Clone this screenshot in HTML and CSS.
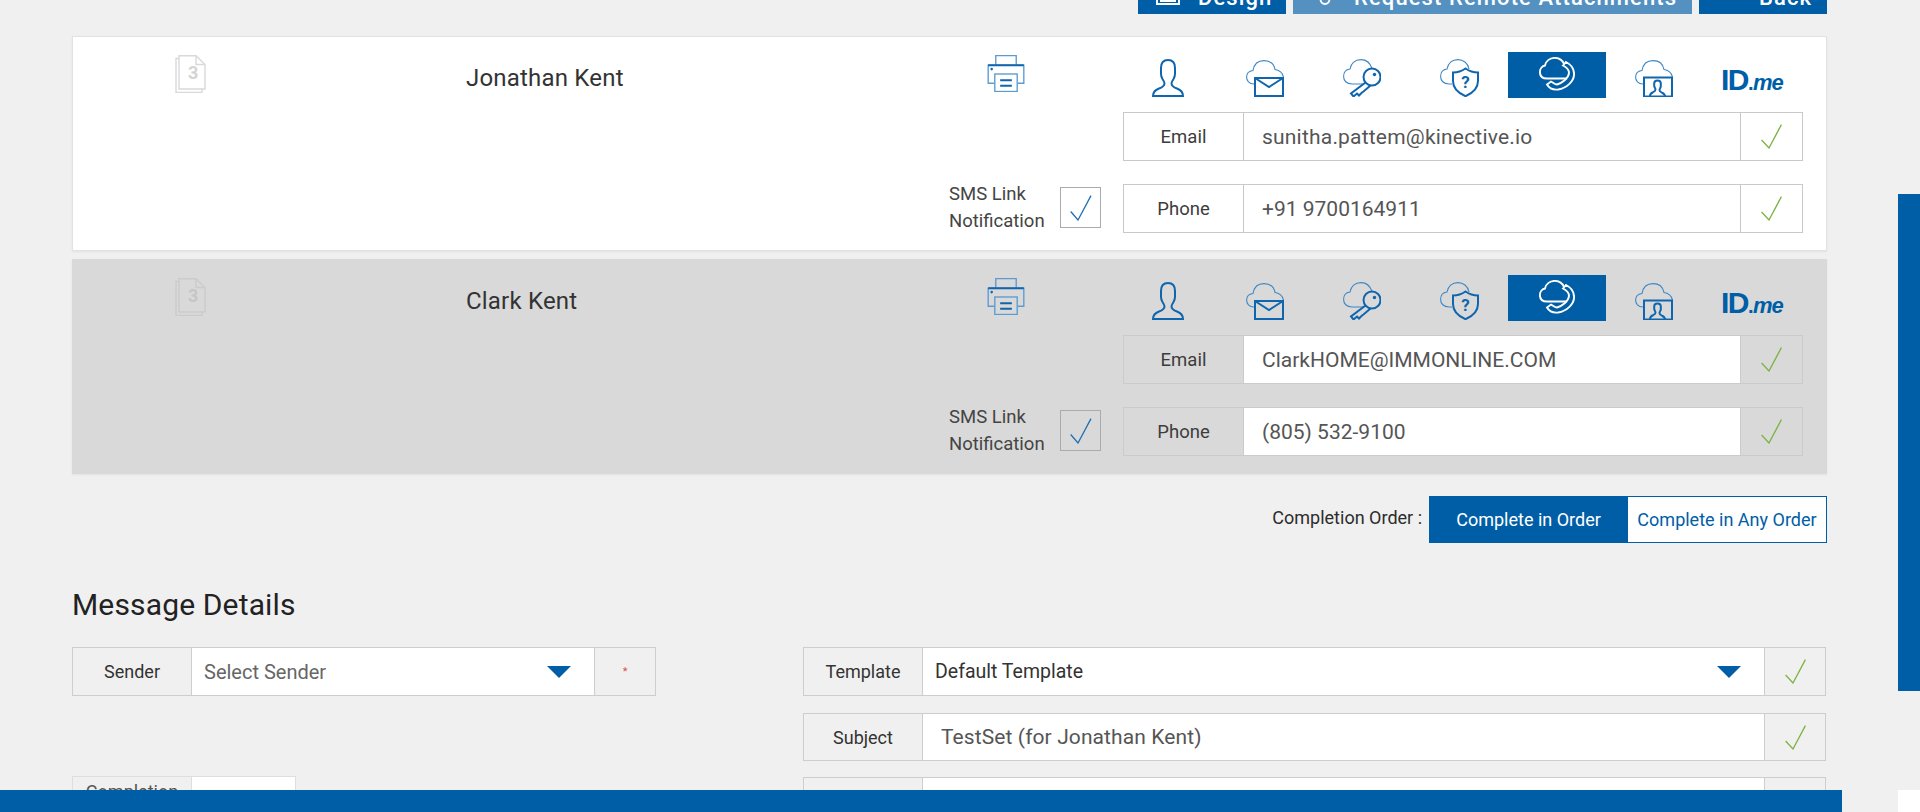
FILE: index.html
```html
<!DOCTYPE html>
<html lang="en">
<head>
<meta charset="utf-8">
<title>Recipients</title>
<link rel="stylesheet" href="styles.css">
</head>
<body>
<svg class="defs" xmlns="http://www.w3.org/2000/svg">
  <symbol id="i-pages" viewBox="0 0 31 38">
    <path class="ln" d="M4 3.500H1V37.500H27V34"/>
    <path class="ln" d="M4 .7H21L30 9.500V34H4Z"/>
    <path class="ln" d="M21 .7V9.500H30"/>
  </symbol>
  <symbol id="i-print" viewBox="0 0 38 38">
    <path class="lt" d="M8.500 10V.7H29.500V10"/>
    <path class="lt" d="M7 29H.7V10.500H37.300V29H31"/>
    <path class="dk" d="M.7 10.500H37.300"/>
    <circle class="fd" cx="4.300" cy="14.500" r="1.300"/>
    <rect class="lt" x="7.500" y="19.500" width="23" height="18"/>
    <path class="dk" d="M13 26H25M13 31.500H25"/>
  </symbol>
  <symbol id="i-person" viewBox="0 0 32 38">
    <path class="dk" d="M1 37c0-4 2-6 6-7.500 4-1.500 5.500-3 5.500-5 0-1.500-1-3-2-4.500-.8-1.500-1.500-3-1.500-5V9C9 4 11.500 1 16 1s7 3 7 8v6c0 2-.7 3.500-1.500 5-1 1.500-2 3-2 4.500 0 2 1.500 3.500 5.500 5 4 1.500 6 3.500 6 7.500z"/>
  </symbol>
  <symbol id="i-mail" viewBox="0 0 38 37">
    <path class="th" d="M8 24C3 24 .6 20.500 .6 17 .6 13.500 3 11 7 10.500 8 4.500 12 .6 18 .6 24 .6 28 4 29 9.500 33 10 37 13 37.400 17"/>
    <rect class="dk" x="9" y="18" width="28" height="18"/>
    <path class="dk" d="M9 18L23 27 37 18"/>
  </symbol>
  <symbol id="i-key" viewBox="0 0 38 38">
    <path class="th" d="M21 25H9C3.500 25 .6 21.500 .6 17.500 .6 13.500 3 10.500 7 10 8 4.500 12 .6 18 .6 23 .6 27 3.500 29 9.500"/>
    <circle class="dk" cx="29" cy="18" r="8.500"/>
    <circle class="fd" cx="31.500" cy="15.500" r="1.700"/>
    <path class="dk" d="M22.500 23.500L8 34.500 10.500 37.500 14 34.500 16 36.500 19 33.500 20.500 32.500 27.500 26.500"/>
  </symbol>
  <symbol id="i-shield" viewBox="0 0 39 38">
    <path class="th" d="M12 25H9C3.500 25 .6 21.500 .6 17.500 .6 13.500 3 10.500 7 10 8 4.500 12 .6 18 .6 23 .6 28 4 29 10"/>
    <path class="dk" d="M25.500 9.500C29 12 33 13.500 38 13.500V22C38 29 33 34 25.500 37.200 18 34 13 29 13 22V13.500C18 13.500 22 12 25.500 9.500Z"/>
    <text class="qm" x="25.500" y="29">?</text>
  </symbol>
  <symbol id="i-call" viewBox="0 0 36 34">
    <path class="wt" d="M8 21.500C3 21.500 .9 18.500 .9 15 .9 11.500 3.500 9 6 8.500 7 4 11 .9 16 .9 20 .9 24 3.500 25 7M8 21.500H28"/>
    <path class="wt" d="M24 8.500L27 5C33 8 35.100 12 35.100 17 35.100 24 28 31 19 32.500 14.500 33 10 31 8 27.500L12 24.500C14 25.500 16 27.500 18 27.500 23 26 29.500 21.500 30 16 30 13 27 10 24 8.500Z"/>
  </symbol>
  <symbol id="i-video" viewBox="0 0 38 37">
    <path class="th" d="M8 24C3 24 .6 20.500 .6 17 .6 13.500 3 11 7 10.500 8 4.500 12 .6 18 .6 24 .6 28 4 29 9.500 33 10 37 13 37.400 17"/>
    <rect class="dk" x="9" y="17.500" width="28" height="19"/>
    <path class="dk" d="M15 36c0-2 1-3 3-3.800 1.500-.7 2.500-1.500 2.500-2.700 0-1-1-2-1.300-3.500v-2.500c0-2 1.300-3 3.300-3s3.300 1 3.300 3V26.500c-.3 1.500-1.300 2.500-1.300 3.500 0 1.200 1 2 2.500 2.700 2 .8 3 1.800 3 3.800"/>
  </symbol>
  <symbol id="i-ok" viewBox="0 0 21 25">
    <path class="ok" d="M.6 16L8 24 20.400 .6"/>
  </symbol>
  <symbol id="i-tick" viewBox="0 0 22 26">
    <path class="tk" d="M.7 16.500L8 25 21 .6"/>
  </symbol>
  <symbol id="i-doc" viewBox="0 0 24 16">
    <path class="wt" d="M1 1H23V15H1ZM4 7H20M4 12H20"/>
  </symbol>
  <symbol id="i-clip" viewBox="0 0 12 16">
    <path class="wt" d="M1.500 2V10C1.500 13 3.500 15 6 15S10.500 13 10.500 10V2"/>
  </symbol>
</svg>

<div class="toolbar">
  <a class="btn btn-design"><svg class="btn-ico-doc"><use href="#i-doc"/></svg><span>Design</span></a>
  <a class="btn btn-request"><svg class="btn-ico-clip"><use href="#i-clip"/></svg><span>Request Remote Attachments</span></a>
  <a class="btn btn-back"><span>Back</span></a>
</div>

<main class="page">
  <section class="card">
    <div class="card-pages"><svg class="ico-pages"><use href="#i-pages"/></svg><b class="pages-num">3</b></div>
    <div class="card-name">Jonathan Kent</div>
    <div class="card-right">
      <div class="printer"><svg class="ico"><use href="#i-print"/></svg></div>
      <div class="auth">
        <span class="auth-item auth-nudge"><svg class="ico-person"><use href="#i-person"/></svg></span>
        <span class="auth-item auth-nudge"><svg class="ico"><use href="#i-mail"/></svg></span>
        <span class="auth-item"><svg class="ico ico-h38"><use href="#i-key"/></svg></span>
        <span class="auth-item"><svg class="ico ico-w39"><use href="#i-shield"/></svg></span>
        <span class="auth-item is-on"><svg class="ico-call"><use href="#i-call"/></svg></span>
        <span class="auth-item"><svg class="ico"><use href="#i-video"/></svg></span>
        <span class="auth-item idme"><b>ID</b><b class="idme-dot">.</b><i>me</i></span>
      </div>
      <div class="blank"></div>
      <div class="field">
        <span class="f-label">Email</span><span class="f-value f-value-wide">sunitha.pattem@kinective.io</span><span class="f-state"><svg class="ico-ok"><use href="#i-ok"/></svg></span>
      </div>
      <div class="sms">
        <span class="sms-text">SMS Link<br>Notification</span>
        <span class="sms-box"><svg class="ico-tick"><use href="#i-tick"/></svg></span>
      </div>
      <div class="field">
        <span class="f-label">Phone</span><span class="f-value">+91 9700164911</span><span class="f-state"><svg class="ico-ok"><use href="#i-ok"/></svg></span>
      </div>
    </div>
  </section>

  <section class="card card-muted">
    <div class="card-pages"><svg class="ico-pages"><use href="#i-pages"/></svg><b class="pages-num">3</b></div>
    <div class="card-name">Clark Kent</div>
    <div class="card-right">
      <div class="printer"><svg class="ico"><use href="#i-print"/></svg></div>
      <div class="auth">
        <span class="auth-item auth-nudge"><svg class="ico-person"><use href="#i-person"/></svg></span>
        <span class="auth-item auth-nudge"><svg class="ico"><use href="#i-mail"/></svg></span>
        <span class="auth-item"><svg class="ico ico-h38"><use href="#i-key"/></svg></span>
        <span class="auth-item"><svg class="ico ico-w39"><use href="#i-shield"/></svg></span>
        <span class="auth-item is-on"><svg class="ico-call"><use href="#i-call"/></svg></span>
        <span class="auth-item"><svg class="ico"><use href="#i-video"/></svg></span>
        <span class="auth-item idme"><b>ID</b><b class="idme-dot">.</b><i>me</i></span>
      </div>
      <div class="blank"></div>
      <div class="field">
        <span class="f-label">Email</span><span class="f-value">ClarkHOME@IMMONLINE.COM</span><span class="f-state"><svg class="ico-ok"><use href="#i-ok"/></svg></span>
      </div>
      <div class="sms">
        <span class="sms-text">SMS Link<br>Notification</span>
        <span class="sms-box"><svg class="ico-tick"><use href="#i-tick"/></svg></span>
      </div>
      <div class="field">
        <span class="f-label">Phone</span><span class="f-value">(805) 532-9100</span><span class="f-state"><svg class="ico-ok"><use href="#i-ok"/></svg></span>
      </div>
    </div>
  </section>

  <div class="order">
    <span class="order-label">Completion Order :</span>
    <span class="order-on">Complete in Order</span>
    <span class="order-off">Complete in Any Order</span>
  </div>

  <h2 class="heading">Message Details</h2>

  <div class="details">
    <div class="col col-left">
      <div class="mfield">
        <span class="m-label m-label-s">Sender</span>
        <span class="m-value m-select m-muted">Select Sender<i class="caret"></i></span>
        <span class="m-state m-state-s"><span class="req">*</span></span>
      </div>
      <div class="mfield mfield-short">
        <span class="m-label m-label-c">Completion</span>
        <span class="m-value m-value-c"></span>
      </div>
    </div>
    <div class="col col-right">
      <div class="mfield mfield-template">
        <span class="m-label">Template</span>
        <span class="m-value m-select m-dark">Default Template<i class="caret"></i></span>
        <span class="m-state"><svg class="ico-ok"><use href="#i-ok"/></svg></span>
      </div>
      <div class="mfield mfield-subject">
        <span class="m-label">Subject</span>
        <span class="m-value m-subject">TestSet (for Jonathan Kent)</span>
        <span class="m-state"><svg class="ico-ok"><use href="#i-ok"/></svg></span>
      </div>
      <div class="mfield">
        <span class="m-label"></span>
        <span class="m-value"></span>
        <span class="m-state"></span>
      </div>
    </div>
  </div>
</main>

<div class="bottom-bar"></div>
<div class="rail-thumb"></div>
<div class="rail-corner"></div>
</body>
</html>
```
FILE: styles.css
```css
* { box-sizing: border-box; }
html, body { height: 812px; overflow: hidden; }
body {
  margin: 0;
  background: #f0f0f0;
  font-family: Roboto, "Liberation Sans", sans-serif;
  color: #333;
}
.defs { display: none; }

/* symbol paint classes */
.ln { fill: none; stroke: var(--page-ico, #d9d9d9); stroke-width: 1.4; }
.lt { fill: none; stroke: #5c9bd1; stroke-width: 1.4; }
.dk { fill: none; stroke: #0f66ae; stroke-width: 2; }
.th { fill: none; stroke: #3f87c4; stroke-width: 1.100; }
.fd { fill: #0f66ae; }
.wt { fill: none; stroke: #fff; stroke-width: 1.900; }
.ok { fill: none; stroke: #7cb342; stroke-width: 1.300; }
.tk { fill: none; stroke: #1f70b4; stroke-width: 1.300; }
.qm { fill: #0f66ae; font: 700 17px Roboto, sans-serif; text-anchor: middle; }

/* top toolbar, scrolled mostly off-screen */
.toolbar {
  height: 14px;
  margin-right: 93px;
  display: flex;
  justify-content: flex-end;
  align-items: flex-end;
  gap: 7px;
  overflow: hidden;
}
.btn {
  flex: none;
  height: 34px;
  display: flex;
  align-items: center;
  background: #005ea6;
  color: #fff;
  font-size: 22px;
  font-weight: 500;
  letter-spacing: 1.100px;
  white-space: nowrap;
}
.btn-design { width: 148px; padding-left: 18px; gap: 18px; }
.btn-request { width: 399px; padding-left: 26px; gap: 23px; background: #5490c0; }
.btn-back { width: 128px; padding-left: 60px; }
.btn-ico-doc { width: 24px; height: 16px; }
.btn-ico-clip { width: 12px; height: 16px; }

/* page column */
.page { margin: 22px 93px 0 72px; }

/* recipient cards */
.card {
  height: 215px;
  margin-bottom: 8px;
  display: flex;
  background: #fff;
  border: 1px solid #e2e2e2;
  box-shadow: 0 1px 2px rgba(0, 0, 0, .06);
}
.card-muted { background: #d9d9d9; border-color: #d9d9d9; --page-ico: #cbcbcb; }
.card-pages { position: relative; flex: none; width: 393px; padding: 18px 0 0 102px; }
.ico-pages { display: block; width: 31px; height: 38px; }
.pages-num {
  position: absolute;
  left: 115px;
  top: 25px;
  font-size: 18px;
  color: #d4d4d4;
}
.card-muted .pages-num { color: #c6c6c6; }
.card-name {
  flex: none;
  width: 484px;
  padding-top: 27px;
  font-size: 24px;
  line-height: 28px;
  letter-spacing: .2px;
  color: #333;
}
.card-right {
  flex: none;
  width: 853px;
  padding-top: 15px;
  display: grid;
  grid-template-columns: 173px 680px;
  grid-template-rows: 46px 49px 49px;
  row-gap: 14px;
  align-content: start;
}
.printer { padding: 3px 0 0 37px; }
.ico { display: block; width: 38px; height: 37px; }
.ico-h38 { height: 38px; }
.ico-w39 { width: 39px; height: 38px; }
.auth {
  display: flex;
  margin-left: -5px;
  width: 683px;
}
.auth-item {
  flex: none;
  width: 97.500px;
  height: 46px;
  display: flex;
  justify-content: center;
  align-items: flex-end;
  padding-bottom: 1px;
}
.auth-nudge { padding-left: 2px; }
.ico-person { display: block; width: 32px; height: 38px; }
.is-on { align-items: center; padding: 0; background: #005ea6; }
.ico-call { display: block; width: 36px; height: 34px; margin-bottom: 2px; }
.idme {
  align-items: baseline;
  padding: 13px 0 0;
  color: #005ea6;
  line-height: 30px;
}
.idme b { font: 700 30px/30px "Liberation Sans", sans-serif; letter-spacing: -1.500px; }
.idme .idme-dot { font-size: 20px; letter-spacing: -.5px; }
.idme i { font: italic 700 22px/30px "Liberation Sans", sans-serif; letter-spacing: -1.200px; }

.field {
  display: flex;
  height: 49px;
  border: 1px solid #c9c9c9;
  font-size: 18.500px;
}
.field + .sms + .field { margin-top: 9px; }
.f-label {
  flex: none;
  width: 119px;
  display: flex;
  justify-content: center;
  align-items: center;
  color: #3c3c3c;
}
.f-value {
  flex: 1;
  display: flex;
  align-items: center;
  padding-left: 18px;
  background: #fff;
  border-left: 1px solid #c9c9c9;
  border-right: 1px solid #c9c9c9;
  font-size: 21px;
  color: #555;
}
.f-value-wide { letter-spacing: .2px; }
.f-state {
  flex: none;
  width: 61px;
  display: flex;
  justify-content: center;
  align-items: center;
}
.ico-ok { display: block; width: 21px; height: 25px; }
.card-muted .field, .card-muted .f-value { border-color: #cbcbcb; }

.sms {
  margin-top: 8px;
  height: 49px;
  display: flex;
  align-items: center;
  font-size: 18.500px;
  line-height: 27px;
  color: #444;
}
.sms-text { width: 110px; flex: none; margin-left: -1px; margin-right: 1px; white-space: nowrap; }
.sms-box {
  flex: none;
  width: 41px;
  height: 41px;
  display: flex;
  justify-content: center;
  align-items: center;
  border: 1px solid #ababab;
}
.ico-tick { display: block; width: 22px; height: 26px; }

/* completion order */
.order {
  margin-top: 22px;
  display: flex;
  justify-content: flex-end;
  align-items: stretch;
  height: 47px;
  font-size: 18px;
}
.order-label { align-self: center; margin: -4px 7px 0 0; color: #2c2c2c; }
.order-on {
  width: 199px;
  display: flex;
  justify-content: center;
  align-items: center;
  background: #005ea6;
  color: #fff;
}
.order-off {
  width: 199px;
  display: flex;
  justify-content: center;
  align-items: center;
  background: #fff;
  border: 1px solid #005ea6;
  border-left: 0;
  color: #005ea6;
}

/* message details */
.heading {
  margin: 44px 0 0;
  font-size: 30px;
  line-height: 36px;
  font-weight: 400;
  letter-spacing: .15px;
  color: #222;
}
.details {
  margin-top: 24px;
  display: flex;
  justify-content: space-between;
}
.col { display: flex; flex-direction: column; }
.col-left { width: 584px; gap: 80px; }
.col-right { width: 1023px; margin-right: 1px; gap: 16px; }
.mfield {
  display: flex;
  height: 49px;
  border: 1px solid #cdcdcd;
  font-size: 18px;
}
.mfield-template { margin-bottom: 1px; }
.mfield-subject { height: 48px; }
.mfield-short { width: 224px; border-color: #dedede; }
.m-label {
  flex: none;
  width: 118px;
  display: flex;
  justify-content: center;
  align-items: center;
  color: #333;
}
.m-label-c { align-items: flex-start; padding-top: 3px; color: #555; line-height: 24px; }
.m-value {
  flex: 1;
  display: flex;
  align-items: center;
  background: #fff;
  border-left: 1px solid #cdcdcd;
  border-right: 1px solid #cdcdcd;
}
.m-value-c { border-right: 0; border-color: #dedede; }
.m-select { justify-content: space-between; padding: 0 23px 0 12px; }
.m-muted { color: #666; font-size: 20px; }
.m-dark { color: #333; font-size: 19.500px; }
.m-subject { padding-left: 18px; font-size: 21px; color: #555; letter-spacing: .1px; }
.m-state {
  flex: none;
  width: 60px;
  display: flex;
  justify-content: center;
  align-items: center;
}
.req { color: #d9534f; font-size: 11px; }
.caret {
  width: 0;
  height: 0;
  border-left: 12px solid transparent;
  border-right: 12px solid transparent;
  border-top: 12px solid #005ea6;
}

/* fixed chrome */
.bottom-bar {
  position: fixed;
  left: 0;
  bottom: 0;
  width: 1842px;
  height: 22px;
  background: #005ea6;
}
.rail-thumb {
  position: fixed;
  right: 0;
  top: 194px;
  width: 22px;
  height: 497px;
  background: #005ea6;
}
.rail-corner {
  position: fixed;
  right: 0;
  bottom: 0;
  width: 22px;
  height: 22px;
  background: #fff;
}
```
